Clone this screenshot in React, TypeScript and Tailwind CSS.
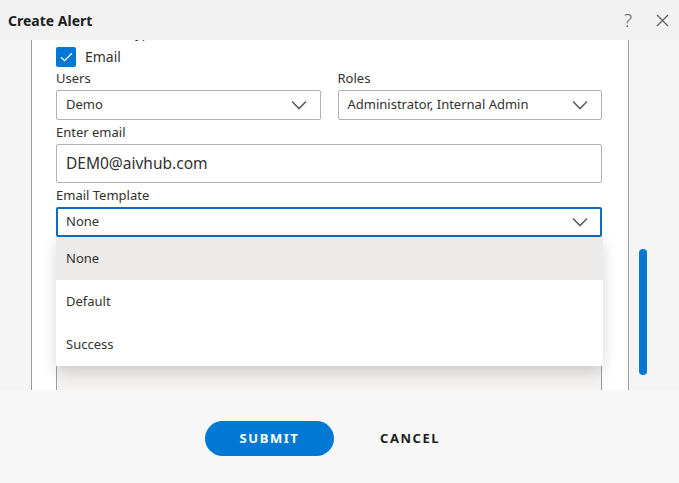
import React from "react";

const font = { fontFamily: '"Noto Sans", "Open Sans", Arial, sans-serif' };

function Chevron() {
  return (
    <svg width="16" height="10" viewBox="0 0 16 10" fill="none">
      <path d="M1 1.5 8 8.5 15 1.5" stroke="#605e5c" strokeWidth="1.6" />
    </svg>
  );
}

function Select({ value, focused = false }: { value: string; focused?: boolean }) {
  return (
    <div
      className={
        focused
          ? "flex h-[30px] items-center justify-between rounded-[2px] border-2 border-[#0f6cbd] bg-white pl-[8px] pr-[12px] text-[13px] text-[#323130]"
          : "flex h-[30px] items-center justify-between rounded-[2px] border border-[#b3b0ad] bg-white pl-[9px] pr-[13px] text-[13px] text-[#323130]"
      }
    >
      <span>{value}</span>
      <Chevron />
    </div>
  );
}

function Label({ children }: { children: React.ReactNode }) {
  return <div className="h-[18px] text-[13px] leading-[18px] text-[#323130]">{children}</div>;
}

const templates = ["None", "Default", "Success"];

export default function App() {
  return (
    <div className="flex h-[483px] w-[679px] flex-col bg-[#f5f5f5]" style={font}>
      {/* header */}
      <div className="flex h-[40px] shrink-0 items-center bg-[#f2f2f2] pl-[8px] pr-[10px]">
        <div className="flex-1 text-[14px] font-bold text-[#201f1e]">Create Alert</div>
        <span className="mr-[24px] text-[19px] font-light leading-none text-[#605e5c]">?</span>
        <svg width="13" height="13" viewBox="0 0 13 13">
          <path d="M1 1 12 12M12 1 1 12" stroke="#605e5c" strokeWidth="1.2" />
        </svg>
      </div>

      {/* body */}
      <div className="flex h-[350px] shrink-0">
        <div className="w-[31px] shrink-0" />
        <div className="w-[598px] shrink-0 overflow-hidden border-x border-[#a19f9d] bg-white">
          <div className="-mt-[16px] flex flex-col pl-[24px] pr-[26px]">
            <div className="h-[20px] text-[13px] leading-[18px] text-[#323130]">Notification type</div>
            <div className="mt-[2px] flex items-center gap-[9px]">
              <div className="flex h-[20px] w-[20px] items-center justify-center rounded-[2px] bg-[#0078d4]">
                <svg width="13" height="10" viewBox="0 0 13 10" fill="none">
                  <path d="M1 5.2 4.5 8.6 12 1.2" stroke="white" strokeWidth="1.3" />
                </svg>
              </div>
              <span className="text-[14px] text-[#323130]">Email</span>
            </div>

            <div className="mt-[2px] grid grid-cols-2 gap-x-[17px]">
              <div>
                <Label>Users</Label>
                <div className="mt-[3px]">
                  <Select value="Demo" />
                </div>
              </div>
              <div>
                <Label>Roles</Label>
                <div className="mt-[3px]">
                  <Select value="Administrator, Internal Admin" />
                </div>
              </div>
            </div>

            <div className="mt-[3px]">
              <Label>Enter email</Label>
            </div>
            <div className="mt-[3px] flex h-[39px] items-center rounded-[2px] border border-[#b3b0ad] px-[9px] text-[15.5px] text-[#323130]">
              DEM0@aivhub.com
            </div>

            <div className="mt-[3px]">
              <Label>Email Template</Label>
            </div>
            <div className="relative mt-[3px]">
              <Select value="None" focused />
              <div className="absolute left-0 right-[-1px] top-[30px] z-10 bg-white shadow-[0_6px_14px_rgba(0,0,0,0.16)]">
                {templates.map((t, i) => (
                  <div
                    key={t}
                    className={
                      i === 0
                        ? "flex h-[43px] items-center bg-[#edebe9] px-[10px] text-[13px] text-[#323130]"
                        : "flex h-[43px] items-center px-[10px] text-[13px] text-[#323130]"
                    }
                  >
                    {t}
                  </div>
                ))}
              </div>
            </div>

            {/* message box sitting under the open list */}
            <div className="mt-[14px] h-[200px] rounded-[2px] border border-[#a19f9d] bg-[#f3f2f1]" />
          </div>
        </div>
        <div className="flex-1 pl-[10px] pt-[209px]">
          <div className="h-[126px] w-[8px] rounded-full bg-[#0078d4]" />
        </div>
      </div>

      {/* footer */}
      <div className="flex flex-1 items-start bg-[#f7f7f7] pl-[205px] pt-[31px]">
        <button className="h-[35px] w-[129px] rounded-full bg-[#0078d4] text-[13px] font-bold tracking-[0.12em] text-white">
          SUBMIT
        </button>
        <button className="ml-[46px] h-[35px] text-[13px] font-bold tracking-[0.12em] text-[#201f1e]">
          CANCEL
        </button>
      </div>
    </div>
  );
}
